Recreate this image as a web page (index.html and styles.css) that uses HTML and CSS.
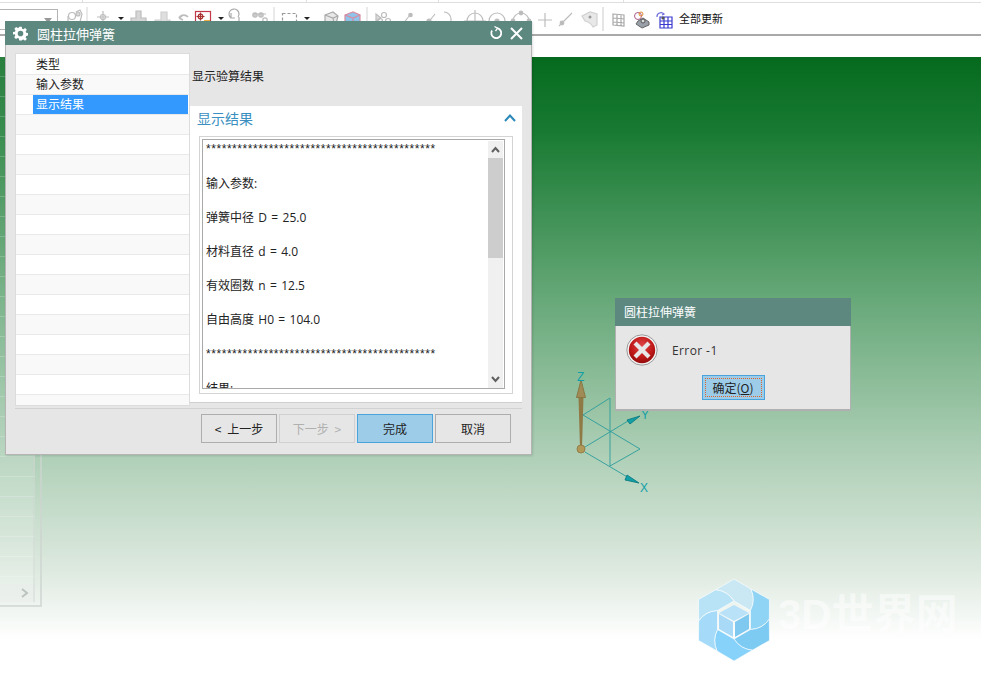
FILE: index.html
```html
<!DOCTYPE html>
<html lang="zh">
<head>
<meta charset="utf-8">
<title>圆柱拉伸弹簧</title>
<link rel="stylesheet" href="styles.css">
</head>
<body>
<div class="app">
  <div class="tabstrip">
    <span class="seg seg-a"></span><span class="seg seg-b"></span><span class="seg seg-c"></span><span class="seg seg-d"></span>
  </div>
  <div class="toolbar">
    <div class="combo"><span class="combo-arrow"></span></div>
    <svg class="tool-icons" width="615" height="31" viewBox="60 3 615 31" fill="none" stroke="#bdbdbd" stroke-width="1.2">
      <g><circle cx="72" cy="16" r="3.5"/><path d="M68 22v-6M76 12l4-2 2 4-2 8h-5"/><circle cx="78" cy="14" r="2" fill="#d8d8d8"/></g>
      <path d="M87 7v26" stroke="#dcdcdc"/>
      <g><path d="M103 11v12M97 17h12M95 23h15v4" /><circle cx="103" cy="17" r="2.5"/></g>
      <path d="M118 17h6l-3 3z" fill="#222" stroke="none"/>
      <g fill="#d6d6d6"><path d="M136 11h5v7h5v5h-15v-5h5z"/></g>
      <g fill="#dedede" stroke="#cfcfcf"><path d="M161 12h6v8h3v5h-15v-5h6z"/></g>
      <g><path d="M179 18a5 4 0 0 1 9-1M179 18l4-3M179 18l4 2" stroke-width="1.6"/><path d="M176 23h14" stroke="#d8d8d8" stroke-width="2"/></g>
      <rect x="195.500" y="11.500" width="15" height="15" fill="#fff" stroke="#c23a4a"/>
      <g stroke="#a33"><circle cx="200.500" cy="16.500" r="2.300"/><path d="M200.500 12.500v8M196.500 16.500h8"/></g>
      <rect x="204" y="20" width="6" height="4" fill="#eeb040" stroke="none"/>
      <path d="M218 17h6l-3 3z" fill="#222" stroke="none"/>
      <g stroke="#aaa"><path d="M231 18a5 5 0 1 1 7-1M231 13v5h4"/><path d="M239 17v8M235 22h8"/></g>
      <g><circle cx="255" cy="15" r="2.200" fill="#ccc"/><circle cx="261" cy="15" r="2.200" fill="#ccc"/><circle cx="265" cy="20" r="2.200"/><path d="M253 14h13M262 22l4 4"/></g>
      <path d="M274 7v26" stroke="#dcdcdc"/>
      <rect x="282.500" y="13.500" width="14" height="12" stroke="#999" stroke-dasharray="3 2"/>
      <path d="M304 17h6l-3 3z" fill="#222" stroke="none"/>
      <g fill="#e8e8e8" stroke="#aaa"><path d="M325 15l8-3 5 4-3 12h-10z"/><path d="M325 15l8 3 5-2M333 18l2 10" fill="none"/></g>
      <g><path d="M345 15l8-3 7 3v12h-15z" fill="#8fc4ea" stroke="#d88ca0"/><path d="M345 15l8 3 7-3M353 18v9" stroke="#d88ca0"/></g>
      <path d="M367 7v26" stroke="#dcdcdc"/>
      <g><path d="M376 14v8l5-4z" fill="#ddd"/><circle cx="384" cy="15" r="2.500"/><circle cx="380" cy="21" r="2.500"/><circle cx="388" cy="21" r="2.500"/></g>
      <g><path d="M410 15l-8 10"/><circle cx="410.500" cy="15" r="1.700" fill="#bbb"/></g>
      <g><path d="M435 14l-8 10"/><circle cx="429" cy="21" r="2" fill="#bbb"/></g>
      <path d="M444 12a7 7 0 0 1 7 7v5M449 22l2 3 2-3" />
      <g><circle cx="475" cy="21" r="8"/><path d="M475 10v20M464 21h22"/></g>
      <g><circle cx="497" cy="21" r="8"/><circle cx="497" cy="21" r="2" fill="#bbb"/></g>
      <g><circle cx="521" cy="21" r="8"/><circle cx="521" cy="13" r="1.800" fill="#bbb"/><circle cx="513" cy="21" r="1.800" fill="#bbb"/><circle cx="529" cy="21" r="1.800" fill="#bbb"/></g>
      <path d="M545 13v14M538 20h14"/>
      <g><path d="M572 13l-13 13"/><circle cx="562" cy="23" r="1.800" fill="#bbb"/></g>
      <g fill="#e8e8e8" stroke="#d0d0d0"><path d="M582 16l8-4 7 2v11l-4 2a12 12 0 0 0-8-6z"/><circle cx="590" cy="17" r="1.500" fill="#999" stroke="none"/></g>
      <path d="M603 7v24" stroke="#d4d4d4"/>
      <g stroke="#aaa"><path d="M613 14l11 1v11l-11-1zM617 14.500v11M621 14.800v11M613 18l11 1M613 22l11 1"/></g>
      <g stroke-width="1"><circle cx="638" cy="16" r="3.500" stroke="#b05a8a"/><circle cx="641" cy="14" r="2" stroke="#e08a30"/><path d="M638 21l5-3 6 4v3l-7 3-6-4z" fill="#9aa0a8" stroke="#666"/><circle cx="643" cy="21" r="2" fill="#ddd" stroke="#555"/></g>
      <g stroke="#3a3ad0"><path d="M660 17h12v11h-12zM664 17v11M668 17v11M660 21h12M660 24.500h12" /><path d="M657 17a4 4 0 0 1 7-3l-2 1" stroke="#6a6ae0"/><circle cx="663" cy="18" r="1.600" fill="#555" stroke="none"/></g>
    </svg>
    <span class="tool-label">全部更新</span>
  </div>
  <div class="band"></div>
  <main class="viewport">
    <aside class="ghost-panel">
      <div class="ghost-rows"></div>
      <div class="ghost-scroll"><svg width="8" height="10" viewBox="0 0 8 10" fill="none" stroke="#bcc4bf" stroke-width="2"><path d="M1 1l5 4-5 4"/></svg></div>
    </aside>

    <svg class="triad" width="90" height="130" viewBox="570 370 90 130" fill="none" stroke="#2a9c9c" stroke-width="0.9">
      <path d="M583 415l27-17v68M583 415l57 34-30 17M585 447l43-26M585 452l44 26"/>
      <path d="M627 420l13-4-10 8z" fill="#12a0a8" stroke="#0b7b80"/>
      <path d="M627 475l12 8-14-3z" fill="#12a0a8" stroke="#0b7b80"/>
      <path d="M580 448l-1.500-51h5l-1.500 51z" fill="#8f7a45" stroke="none"/>
      <path d="M581 380l-4.500 17.500h9z" fill="#a08a55" stroke="#87733f"/>
      <circle cx="581" cy="449" r="4" fill="#b09858" stroke="#8f7a45"/>
      <text class="axis-label" x="577" y="381">Z</text>
      <text class="axis-label" x="641" y="419">Y</text>
      <text class="axis-label" x="640" y="492">X</text>
    </svg>

    <div class="watermark">
      <svg width="72" height="84" viewBox="-36 -42 72 84" stroke="#fff" stroke-width="0.6">
        <path fill="#c9e8f4" d="M-18.300-30.200L0-41 17-31Q22-20 16.500-9.500L0-19Q-6.300-29-18.300-30.200Z"/>
        <path fill="#8fd3f5" transform="rotate(60)" d="M-18.300-30.200L0-41 17-31Q22-20 16.500-9.500L0-19Q-6.300-29-18.300-30.200Z"/>
        <path fill="#7dcbf2" transform="rotate(120)" d="M-18.300-30.200L0-41 17-31Q22-20 16.500-9.500L0-19Q-6.300-29-18.300-30.200Z"/>
        <path fill="#86d2fa" transform="rotate(180)" d="M-18.300-30.200L0-41 17-31Q22-20 16.500-9.500L0-19Q-6.300-29-18.300-30.200Z"/>
        <path fill="#a5dbf8" transform="rotate(240)" d="M-18.300-30.200L0-41 17-31Q22-20 16.500-9.500L0-19Q-6.300-29-18.300-30.200Z"/>
        <path fill="#b8e2f6" transform="rotate(300)" d="M-18.300-30.200L0-41 17-31Q22-20 16.500-9.500L0-19Q-6.300-29-18.300-30.200Z"/>
        <g stroke="none">
          <path fill="#b9e2f8" d="M0-15L15-7 0 1-15-7Z"/>
          <path fill="#a8daf8" d="M-15-6L-1 2V17L-15 9Z"/>
          <path fill="#7fc8f0" d="M15-6L1 2V17L15 9Z"/>
        </g>
      </svg>
      <span class="watermark-text">3D世界网</span>
    </div>
  </main>

  <section class="dialog wizard">
    <header class="titlebar">
      <svg class="gear" width="15" height="15" viewBox="0 0 24 24"><path fill="#fff" fill-rule="evenodd" d="M10 1h4l.6 3.200 2 .8 2.700-1.800 2.800 2.800-1.800 2.700.8 2 3.200.6v4l-3.200.6-.8 2 1.800 2.700-2.800 2.800-2.700-1.800-2 .8L14 23h-4l-.6-3.200-2-.8-2.700 1.800-2.800-2.800 1.800-2.700-.8-2L0 13.600v-4l3.200-.6.8-2L2.200 4.300 5 1.500l2.700 1.800 2-.8zM12 7.500a4.500 4.500 0 1 0 0 9 4.500 4.500 0 0 0 0-9z"/></svg>
      <span class="title-text">圆柱拉伸弹簧</span>
      <span class="title-actions">
        <svg width="14" height="14" viewBox="0 0 14 14" fill="none" stroke="#fff" stroke-width="1.800"><path d="M8.200 2.200A5 5 0 1 1 3 4.500"/><path d="M5.500 .5l3 1.800-2 2.700" stroke-width="1.300"/></svg>
        <svg width="13" height="13" viewBox="0 0 13 13" fill="none" stroke="#fff" stroke-width="2"><path d="M1 1l11 11M12 1L1 12"/></svg>
      </span>
    </header>
    <div class="wizard-main">
      <nav class="steps">
        <div class="step"><span class="step-text">类型</span></div>
        <div class="step"><span class="step-text">输入参数</span></div>
        <div class="step step-current"><span class="step-text">显示结果</span></div>
        <div class="step"></div><div class="step"></div><div class="step"></div><div class="step"></div>
        <div class="step"></div><div class="step"></div><div class="step"></div><div class="step"></div>
        <div class="step"></div><div class="step"></div><div class="step"></div><div class="step"></div>
        <div class="step"></div><div class="step"></div><div class="step"></div>
      </nav>
      <div class="content">
        <p class="content-head">显示验算结果</p>
        <div class="panel">
          <div class="panel-head">
            <span class="panel-title">显示结果</span>
            <svg width="12" height="8" viewBox="0 0 12 8" fill="none" stroke="#2a88b8" stroke-width="2"><path d="M1 7l5-5.500L11 7"/></svg>
          </div>
          <div class="group">
            <div class="textbox">
              <pre class="log"><span class="stars">********************************************</span>

输入参数:

弹簧中径 D = 25.0

材料直径 d = 4.0

有效圈数 n = 12.5

自由高度 H0 = 104.0

<span class="stars">********************************************</span>

结果:</pre>
              <div class="scrollbar">
                <svg class="sb-arrow" width="15" height="17" viewBox="0 0 15 17" fill="none" stroke="#606060" stroke-width="2"><path d="M4 11l3.500-4 3.500 4"/></svg>
                <div class="sb-thumb"></div>
                <svg class="sb-arrow sb-down" width="15" height="17" viewBox="0 0 15 17" fill="none" stroke="#606060" stroke-width="2"><path d="M4 6l3.500 4 3.500-4"/></svg>
              </div>
            </div>
          </div>
        </div>
      </div>
    </div>
    <footer class="wizard-foot">
      <button class="btn">&lt; 上一步</button>
      <button class="btn btn-disabled">下一步 &gt;</button>
      <button class="btn btn-primary">完成</button>
      <button class="btn">取消</button>
    </footer>
  </section>

  <section class="dialog alert">
    <header class="alert-title">圆柱拉伸弹簧</header>
    <div class="alert-body">
      <svg width="32" height="32" viewBox="0 0 32 32">
        <defs>
          <radialGradient id="redball" cx="50%" cy="35%" r="70%"><stop offset="0" stop-color="#e04848"/><stop offset="0.6" stop-color="#c01818"/><stop offset="1" stop-color="#8a0a0a"/></radialGradient>
        </defs>
        <circle cx="16" cy="16" r="15.200" fill="#f4f4f4" stroke="#999" stroke-width="1"/>
        <circle cx="16" cy="16" r="13.200" fill="url(#redball)"/>
        <path d="M10.500 10.500l11 11M21.500 10.500l-11 11" stroke="#e8e8e8" stroke-width="4.200" stroke-linecap="square"/>
      </svg>
      <span class="alert-msg">Error -1</span>
    </div>
    <div class="alert-foot">
      <button class="btn-ok"><span class="ok-focus">确定(<u>O</u>)</span></button>
    </div>
  </section>
</div>
</body>
</html>
```
FILE: styles.css
```css
* { box-sizing: border-box; }
html, body { margin: 0; height: 100%; background: #fff; }
body { overflow: hidden; font-family: "Open Sans", "Noto Sans CJK SC", sans-serif; font-size: 12px; color: #222; }
.app { position: relative; width: 981px; height: 674px; display: flex; flex-direction: column; overflow: hidden; }

.tabstrip { height: 3px; display: flex; border-bottom: 1px solid #dedede; flex: none; }
.seg { height: 2px; border-right: 1px solid #dedede; flex: none; }
.seg-a { width: 83px; }
.seg-b { width: 224px; }
.seg-c { width: 132px; }
.seg-d { width: 185px; }

.toolbar { height: 33px; flex: none; display: flex; align-items: flex-start; border-bottom: 2px solid #a9a9a9; background: #fff; }
.combo { width: 58px; height: 21px; margin-top: 6px; margin-right: 2px; border: 1px solid #b4b4b4; border-left: 0; position: relative; flex: none; }
.combo-arrow { position: absolute; right: 5px; top: 8px; border: 4px solid transparent; border-top: 5px solid #999; border-bottom: 0; }
.tool-icons { flex: none; display: block; }
.tool-label { margin-left: 4px; margin-top: 7px; font-size: 11px; line-height: 16px; color: #111; font-family: "Noto Sans CJK SC", sans-serif; }

.band { height: 21px; flex: none; background: #fff; }

.viewport { flex: 1; position: relative; display: flex; align-items: flex-start; background: linear-gradient(180deg, #056a1e 0%, #187a32 12%, #66a878 39%, #b0d0b8 65%, #dde9df 83%, #fff 94.500%); }

.ghost-panel { width: 42px; height: 550px; border-right: 2px solid rgba(205, 212, 208, .7); border-bottom: 2px solid rgba(205, 212, 208, .7); padding-right: 5px; padding-bottom: 3px; display: flex; flex-direction: column; flex: none; }
.ghost-rows { flex: 1; border-right: 2px solid rgba(205, 212, 208, .4); background: repeating-linear-gradient(180deg, rgba(255, 255, 255, .14) 0 19px, rgba(255, 255, 255, .3) 19px 20px); }
.ghost-scroll { height: 18px; background: rgba(235, 238, 236, .6); display: flex; justify-content: flex-end; align-items: center; padding-right: 4px; border-right: 2px solid rgba(205, 212, 208, .4); }

.triad { position: absolute; left: 570px; top: 313px; }
.axis-label { font: 12px "Liberation Sans", sans-serif; fill: #12a0a8; stroke: none; }

.watermark { position: absolute; left: 698px; top: 521px; display: flex; align-items: center; gap: 8px; }
.watermark-text { font: bold 42px/44px "Liberation Sans", "Noto Sans CJK SC", sans-serif; color: rgba(255, 255, 255, .5); margin-top: -10px; white-space: nowrap; }

.dialog { position: absolute; background: #e6e6e6; display: flex; flex-direction: column; }

.wizard { left: 5px; top: 21px; width: 527px; height: 434px; border: 1px solid #b4b4b4; border-top: 0; box-shadow: 1px 1px 2px rgba(0, 0, 0, .12); }
.titlebar { height: 24px; margin: 0 -1px; background: #5c8880; color: #fff; display: flex; align-items: center; padding: 0 9px 0 8px; flex: none; }
.gear { flex: none; }
.title-text { margin-left: 9px; font-size: 13px; font-family: "Noto Sans CJK SC", sans-serif; }
.title-actions { margin-left: auto; display: flex; align-items: center; gap: 7px; }

.wizard-main { display: flex; margin: 8px 9px 0 9px; height: 354px; flex: none; }
.steps { width: 175px; height: 353px; flex: none; background: #fff; border: 1px solid #dcdcdc; padding-top: 1px; overflow: hidden; }
.step { height: 20px; padding-left: 17px; border-bottom: 1px solid #e9e9e9; background: #fff; display: flex; }
.step:nth-child(even) { background: #f9f9f9; }
.step-text { display: block; width: 100%; padding-left: 3px; margin-right: 1px; line-height: 18px; font-family: "Noto Sans CJK SC", sans-serif; }
.step-current { background: #fff; }
.step-current .step-text { background: #3399ff; color: #fff; }

.content { flex: 1; display: flex; flex-direction: column; min-width: 0; }
.content-head { margin: 0; height: 53px; padding: 14px 0 0 2px; line-height: 17px; font-family: "Noto Sans CJK SC", sans-serif; }
.panel { height: 297px; background: #fff; border-bottom: 1px solid #cfcfcf; padding: 0 9px 8px 9px; display: flex; flex-direction: column; }
.panel-head { height: 24px; margin: 0 -3px 6px -2px; flex: none; display: flex; align-items: center; justify-content: space-between; }
.panel-title { font-size: 14px; line-height: 24px; color: #3a8fc0; font-family: "Noto Sans CJK SC", sans-serif; }
.group { flex: 1; border: 1px solid #d4d4d4; padding: 2px 7px 4px 2px; min-height: 0; display: flex; }
.textbox { flex: 1; border: 1px solid #a9a9a9; display: flex; padding: 1px 1px 0 3px; min-width: 0; overflow: hidden; }
.log { flex: 1; margin: -1px 0 0; font: 12px/17px "Open Sans", "Noto Sans CJK SC", sans-serif; word-spacing: 1.2px; color: #222; white-space: pre; overflow: hidden; min-width: 0; }
.stars { font-family: "Liberation Sans", sans-serif; letter-spacing: .55px; }
.scrollbar { width: 15px; flex: none; background: #f0f0f0; display: flex; flex-direction: column; }
.sb-arrow { display: block; flex: none; }
.sb-thumb { height: 100px; background: #cdcdcd; flex: none; }
.sb-down { margin-top: auto; }

.wizard-foot { display: flex; justify-content: flex-end; gap: 2px; margin: 1px 9px 0 9px; padding: 5px 11px 0 0; border-top: 1px solid #d2d2d2; }
.btn { width: 76px; height: 29px; border: 1px solid #adadad; background: #e6e6e6; color: #222; font: 12px "Noto Sans CJK SC", sans-serif; word-spacing: 3px; padding: 0; }
.btn-disabled { color: #b0b0b0; border-color: #d0d0d0; }
.btn-primary { background: #9ccce8; border-color: #4ba3dc; }

.alert { left: 615px; top: 298px; width: 236px; height: 113px; border: 1px solid #b0b0b0; border-top: 0; border-bottom-width: 2px; }
.alert-title { height: 28px; margin: 0 -1px; padding-left: 9px; background: #5c8880; color: #fff; font: 12px/28px "Noto Sans CJK SC", sans-serif; flex: none; }
.alert-body { display: flex; align-items: center; padding: 8px 0 0 10px; height: 40px; flex: none; }
.alert-msg { margin-left: 14px; font-size: 12px; letter-spacing: .4px; color: #333; }
.alert-foot { display: flex; justify-content: center; margin-top: 9px; }
.btn-ok { width: 63px; height: 25px; padding: 2px; background: #9ccce8; border: 1px solid #4ba3dc; font: 12px "Noto Sans CJK SC", sans-serif; color: #222; }
.ok-focus { display: flex; height: 100%; align-items: center; justify-content: center; border: 1px dotted #e0642a; }
```
